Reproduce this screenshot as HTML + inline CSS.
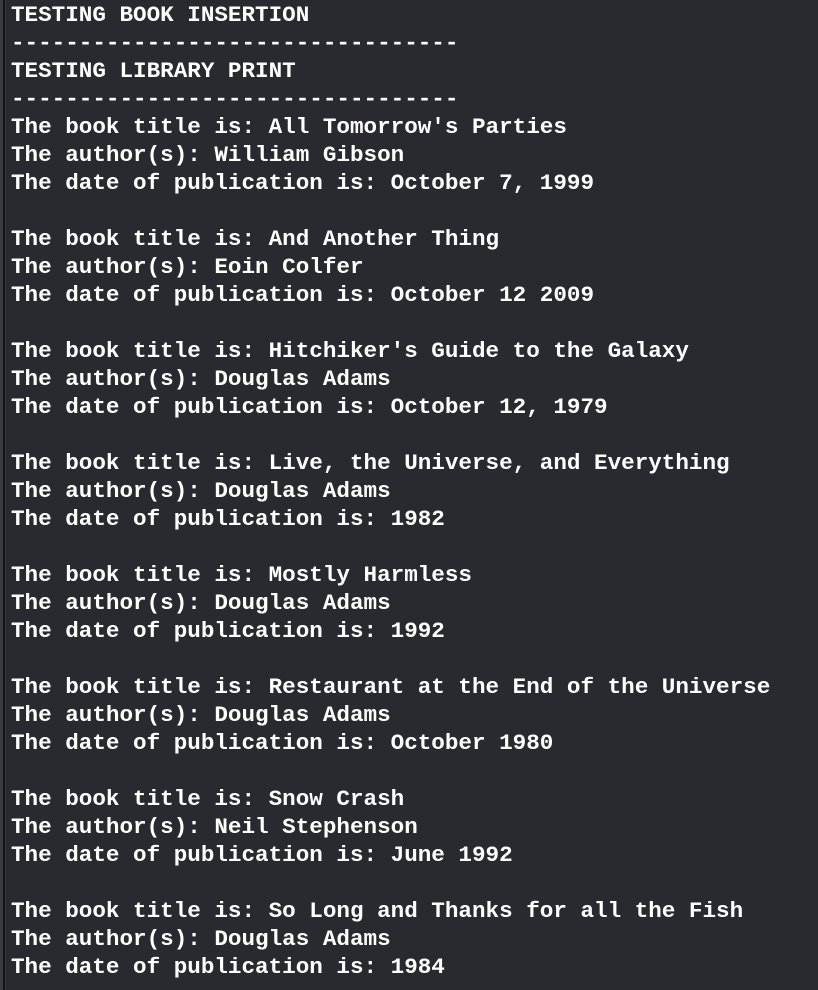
<!DOCTYPE html>
<html><head><style>
html,body{margin:0;padding:0;}
body{width:818px;height:990px;background:#292a2f;overflow:hidden;position:relative;}
.bar{position:absolute;left:0;top:0;width:6px;height:990px;background:#3a3b40;}
.bar2{position:absolute;left:3px;top:0;width:2px;height:990px;background:#141418;}
pre{margin:0;position:absolute;left:11px;top:1px;font-family:"Liberation Mono",monospace;font-weight:bold;font-size:22.6px;line-height:28px;color:#ffffff;}
</style></head><body>
<div class="bar"></div><div class="bar2"></div>
<pre>TESTING BOOK INSERTION
---------------------------------
TESTING LIBRARY PRINT
---------------------------------
The book title is: All Tomorrow's Parties
The author(s): William Gibson
The date of publication is: October 7, 1999

The book title is: And Another Thing
The author(s): Eoin Colfer
The date of publication is: October 12 2009

The book title is: Hitchiker's Guide to the Galaxy
The author(s): Douglas Adams
The date of publication is: October 12, 1979

The book title is: Live, the Universe, and Everything
The author(s): Douglas Adams
The date of publication is: 1982

The book title is: Mostly Harmless
The author(s): Douglas Adams
The date of publication is: 1992

The book title is: Restaurant at the End of the Universe
The author(s): Douglas Adams
The date of publication is: October 1980

The book title is: Snow Crash
The author(s): Neil Stephenson
The date of publication is: June 1992

The book title is: So Long and Thanks for all the Fish
The author(s): Douglas Adams
The date of publication is: 1984</pre>
</body></html>
